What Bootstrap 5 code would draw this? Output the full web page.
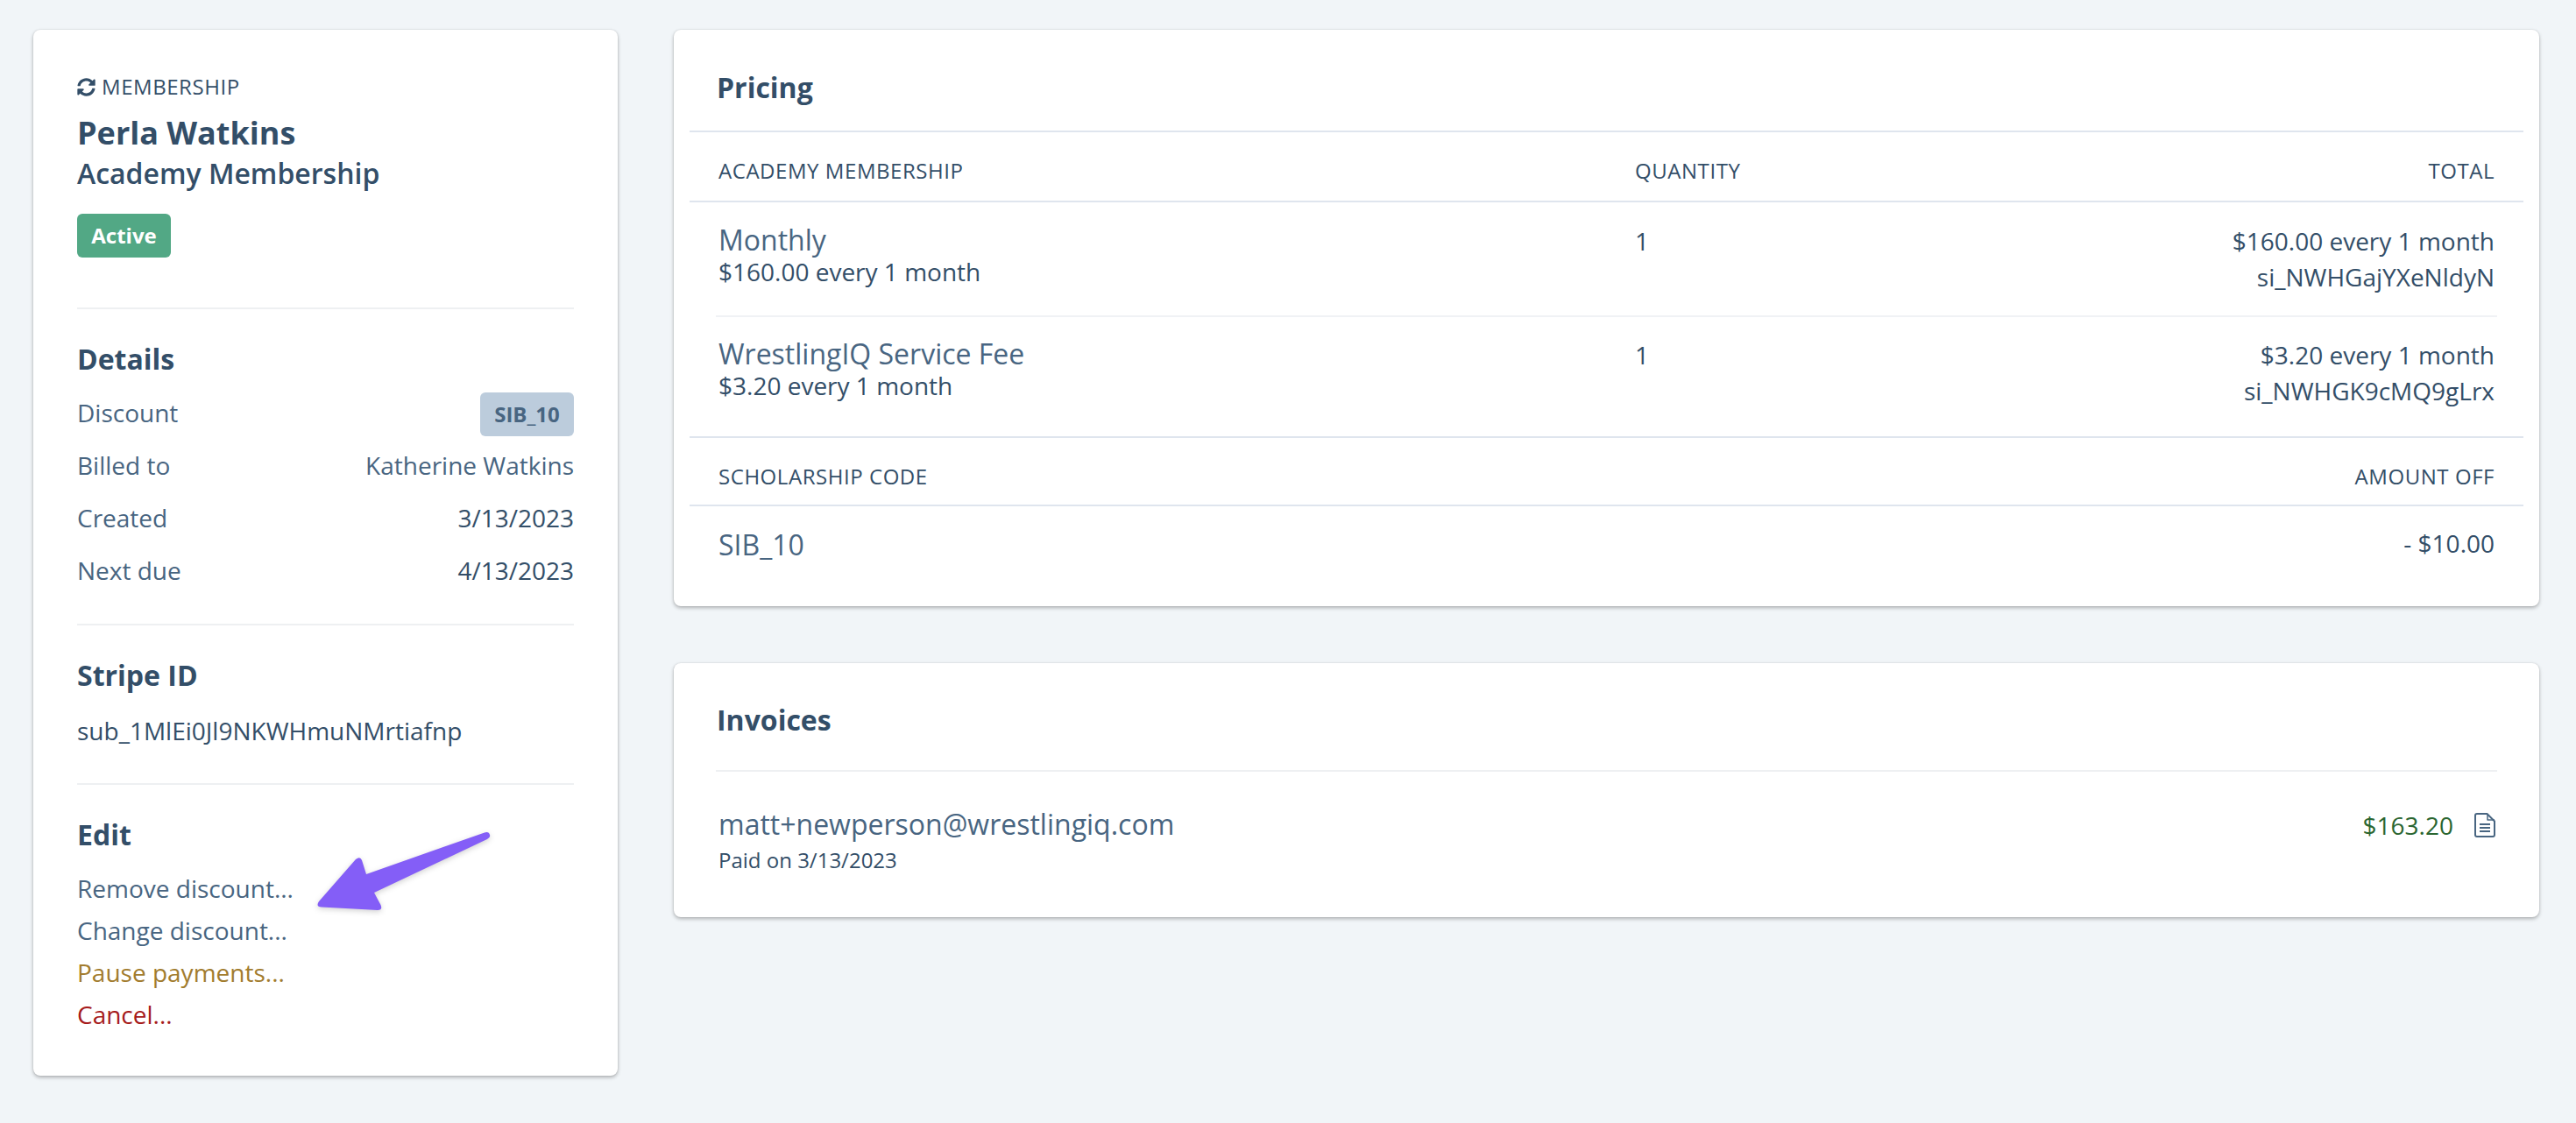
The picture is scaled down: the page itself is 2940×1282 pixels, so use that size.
<!DOCTYPE html>
<html lang="en">
<head>
<meta charset="utf-8">
<title>Membership</title>
<link href="https://cdn.jsdelivr.net/npm/bootstrap@5.3.0/dist/css/bootstrap.min.css" rel="stylesheet">
<style>
html,body{height:100%}
body{background:#f1f5f8;font-family:"Open Sans","Noto Sans",sans-serif;color:#486581;font-size:28px;overflow:hidden}
.page-wrap{padding:34px 42px 0 38px;gap:64px;align-items:flex-start}
.panel{background:#fff;border:0;border-radius:8px;box-shadow:0 2px 4px rgba(0,0,0,.28),0 0 2px rgba(0,0,0,.12)}
.side-panel{width:667px;flex:0 0 667px;padding:47px 50px 44px;position:relative}
.main-col{flex:1 1 auto;min-width:0;gap:65px}
.eyebrow{font-size:24px;line-height:36px;color:#334e68;gap:7px;letter-spacing:.55px}
.eyebrow svg{width:21px;height:21px;fill:#334e68}
.person{font-size:36px;line-height:52px;font-weight:700;color:#334e68;margin:9px 0 0}
.plan{font-size:32px;line-height:38px;font-weight:600;color:#334e68;margin:1px 0 0}
.pill{display:inline-flex;align-items:center;justify-content:center;width:107px;height:50px;border-radius:6px;font-size:24px;font-weight:700}
.pill-ok{background:#52a885;color:#fff;margin-top:27px}
.pill-code{background:#bcccdc;color:#486581}
.rule{height:2px;background:#eef0f2;border:0;opacity:1;margin:0}
.rule-a{margin-top:57px}
.rule-b{margin-top:29px}
.rule-c{margin-top:30px}
.sec-title{font-size:32px;line-height:44px;font-weight:700;color:#334e68;margin:35px 0 0}
.kv{height:60px}
.kv>span:not(.pill){margin-bottom:4px}
.kv-first{margin-top:11px}
.stripe-id{height:60px;line-height:60px;color:#334e68;margin-top:11px}
.dark-val{color:#334e68}
.edit-links{margin-top:17px}
.edit-links a{display:block;height:48px;line-height:44px;text-decoration:none;color:#486581}
.edit-links a.warn{color:#a27c2e}
.edit-links a.danger{color:#a61b1b}
.pointer{position:absolute;left:312px;top:906px;width:220px;height:110px;filter:drop-shadow(0 2px 3px rgba(0,0,0,.18))}
.pricing-panel{height:658px}
.panel-title{font-size:32px;line-height:44px;font-weight:700;color:#334e68;margin:0;padding:44px 49px 27px}
.bar{height:2px;background:#dfe5ee;margin:0 18px}
.hd-row{display:grid;grid-template-columns:1046px 1fr auto;align-items:center;font-size:24px;letter-spacing:.55px;color:#334e68;height:78px;padding:10px 51px 0 51px}
.hd-row.two{height:76px;grid-template-columns:1fr auto;padding-top:12px}
.line-row{display:grid;grid-template-columns:1046px 1fr auto;margin:0 48px;padding:0 3px 0 3px;border-bottom:2px solid #f0f2f5;color:#334e68}
.line-row.last{border-bottom:0}
.r1{height:131px;padding-top:21px}
.r2{height:136px;padding-top:20px}
.item-name{font-size:32px;line-height:44px;color:#486581}
.item-sub{line-height:38px;color:#334e68;margin-top:-5px}
.item-right{line-height:41px;text-align:right;color:#334e68;margin-top:3px}
.qty{line-height:41px;color:#334e68;margin-top:3px}
.disc-row{padding:22px 51px 0 51px;color:#334e68}
.disc-row .qty{margin-top:0}
.invoices-panel{height:290px;padding:0}
.invoices-panel .panel-title{padding:43px 49px 35px}
.thin{height:2px;background:#eef0f2;margin:0 48px}
.inv-row{padding:38px 50px 0 51px}
.inv-mail{font-size:32px;line-height:44px;color:#486581}
.inv-date{font-size:24px;line-height:36px;color:#334e68;margin-top:1px}
.inv-amt{color:#2b6631;line-height:44px;gap:24px;margin-top:1px}
.inv-amt svg{width:24px;height:28px}
</style>
</head>
<body>
<div class="d-flex page-wrap">
  <aside class="panel side-panel">
    <div class="d-flex align-items-center eyebrow">
      <svg viewBox="0 0 512 512"><path d="M370.72 133.28C339.458 104.008 298.888 87.962 255.848 88c-77.458.068-144.328 53.178-162.791 126.85-1.344 5.363-6.122 9.15-11.651 9.15H24.103c-7.498 0-13.194-6.807-11.807-14.176C33.933 94.924 134.813 8 256 8c66.448 0 126.791 26.136 171.315 68.685L463.03 40.97C478.149 25.851 504 36.559 504 57.941V192c0 13.255-10.745 24-24 24H345.941c-21.382 0-32.09-25.851-16.971-40.971l41.75-41.749zM32 296h134.059c21.382 0 32.09 25.851 16.971 40.971l-41.75 41.75c31.262 29.273 71.835 45.319 114.876 45.28 77.418-.07 144.315-53.144 162.787-126.849 1.344-5.363 6.122-9.15 11.651-9.15h57.304c7.498 0 13.194 6.807 11.807 14.176C478.067 417.076 377.187 504 256 504c-66.448 0-126.791-26.136-171.315-68.685L48.97 471.03C33.851 486.149 8 475.441 8 454.059V320c0-13.255 10.745-24 24-24z"/></svg>
      <span>MEMBERSHIP</span>
    </div>
    <h1 class="person">Perla Watkins</h1>
    <h2 class="plan">Academy Membership</h2>
    <div class="pill pill-ok">Active</div>
    <hr class="rule rule-a">
    <h3 class="sec-title">Details</h3>
    <div class="d-flex justify-content-between align-items-center kv kv-first"><span>Discount</span><span class="pill pill-code">SIB_10</span></div>
    <div class="d-flex justify-content-between align-items-center kv"><span>Billed to</span><span>Katherine Watkins</span></div>
    <div class="d-flex justify-content-between align-items-center kv"><span>Created</span><span class="dark-val">3/13/2023</span></div>
    <div class="d-flex justify-content-between align-items-center kv"><span>Next due</span><span class="dark-val">4/13/2023</span></div>
    <hr class="rule rule-b">
    <h3 class="sec-title">Stripe ID</h3>
    <div class="stripe-id">sub_1MlEi0Jl9NKWHmuNMrtiafnp</div>
    <hr class="rule rule-c">
    <h3 class="sec-title">Edit</h3>
    <div class="edit-links">
      <a href="#">Remove discount...</a>
      <a href="#">Change discount...</a>
      <a href="#" class="warn">Pause payments...</a>
      <a href="#" class="danger">Cancel...</a>
    </div>
    <svg class="pointer" viewBox="0 0 220 110" aria-hidden="true"><path d="M68 58L203 10.5Q208 9 209 13Q210 16 206 18L77 79L84.500 93Q87 99 81 99L17 95.500Q10 95 14 89L56 41Q61 37 63 42Z" fill="#845ef7"/></svg>
  </aside>
  <main class="d-flex flex-column main-col">
    <section class="panel pricing-panel">
      <h3 class="panel-title">Pricing</h3>
      <div class="bar"></div>
      <div class="hd-row"><span>ACADEMY MEMBERSHIP</span><span>QUANTITY</span><span>TOTAL</span></div>
      <div class="bar"></div>
      <div class="line-row r1">
        <div><div class="item-name">Monthly</div><div class="item-sub">$160.00 every 1 month</div></div>
        <div class="qty">1</div>
        <div class="item-right">$160.00 every 1 month<br>si_NWHGajYXeNldyN</div>
      </div>
      <div class="line-row r2 last">
        <div><div class="item-name">WrestlingIQ Service Fee</div><div class="item-sub">$3.20 every 1 month</div></div>
        <div class="qty">1</div>
        <div class="item-right">$3.20 every 1 month<br>si_NWHGK9cMQ9gLrx</div>
      </div>
      <div class="bar"></div>
      <div class="hd-row two"><span>SCHOLARSHIP CODE</span><span>AMOUNT OFF</span></div>
      <div class="bar"></div>
      <div class="d-flex justify-content-between disc-row"><span class="item-name">SIB_10</span><span class="qty">- $10.00</span></div>
    </section>
    <section class="panel invoices-panel">
      <h3 class="panel-title">Invoices</h3>
      <div class="thin"></div>
      <div class="d-flex justify-content-between inv-row">
        <div><div class="inv-mail">matt+newperson@wrestlingiq.com</div><div class="inv-date">Paid on 3/13/2023</div></div>
        <div class="d-flex align-items-center align-self-start inv-amt"><span>$163.20</span>
          <svg viewBox="0 0 24 28" fill="none" stroke="#486581" stroke-width="2" stroke-linejoin="round"><path d="M3 1H14.500L23 9.500V25a2 2 0 0 1-2 2H3a2 2 0 0 1-2-2V3a2 2 0 0 1 2-2Z"/><path d="M15 1V8H23" stroke-width="1.500"/><path d="M6 13H18M6 17H18M6 21H18"/></svg>
        </div>
      </div>
    </section>
  </main>
</div>
<script src="https://cdn.jsdelivr.net/npm/bootstrap@5.3.0/dist/js/bootstrap.bundle.min.js"></script>
</body>
</html>
